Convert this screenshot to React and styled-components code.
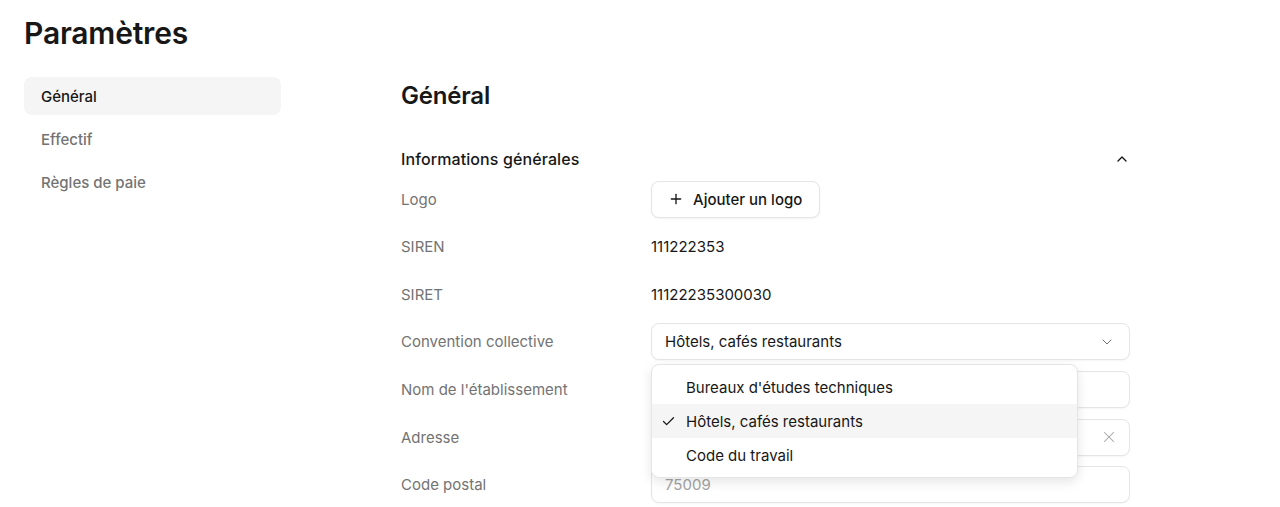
import styled, { createGlobalStyle } from 'styled-components';
import { Plus, ChevronUp, ChevronDown, Check, X } from 'lucide-react';

const Global = createGlobalStyle`
	body {
		margin: 0;
		background: #ffffff;
		font-family: Inter, "Noto Sans", sans-serif;
		color: #171717;
		-webkit-font-smoothing: antialiased;
	}
`;

const Page = styled.div`
	padding: 14px 24px 0 24px;
	height: 507px;
	box-sizing: border-box;
	overflow: hidden;
`;

const Title = styled.h1`
	margin: 0;
	font-size: 30px;
	line-height: 38px;
	font-weight: 600;
	letter-spacing: -0.2px;
`;

const Layout = styled.div`
	display: flex;
	margin-top: 25px;
	gap: 120px;
`;

const Sidebar = styled.nav`
	width: 257px;
	display: flex;
	flex-direction: column;
	gap: 5px;
`;

const NavItem = styled.div`
	height: 38px;
	display: flex;
	align-items: center;
	padding: 0 17px;
	border-radius: 8px;
	font-size: 15px;
	font-weight: 500;
	color: ${(p) => (p.$active ? '#171717' : '#737373')};
	background: ${(p) => (p.$active ? '#f5f5f5' : 'transparent')};
`;

const Main = styled.main`
	width: 729px;
`;

const Heading = styled.h2`
	margin: 0;
	font-size: 24px;
	line-height: 38px;
	font-weight: 600;
	letter-spacing: -0.2px;
`;

const SectionHead = styled.div`
	display: flex;
	align-items: center;
	justify-content: space-between;
	height: 24px;
	margin-top: 32px;
	h3 {
		margin: 0;
		font-size: 16px;
		font-weight: 500;
		letter-spacing: 0.1px;
	}
`;

const Rows = styled.div`
	margin-top: 9.5px;
	display: flex;
	flex-direction: column;
	gap: 10.67px;
`;

const Row = styled.div`
	display: grid;
	grid-template-columns: 250px 1fr;
	align-items: center;
	height: 37px;
	position: relative;
`;

const Label = styled.span`
	font-size: 15px;
	color: #737373;
`;

const Value = styled.span`
	font-size: 15px;
	color: #171717;
`;

const Button = styled.button`
	justify-self: start;
	height: 37px;
	display: flex;
	align-items: center;
	gap: 9px;
	padding: 0 17px 0 16px;
	border: 1px solid #e5e5e5;
	border-radius: 8px;
	background: #fff;
	box-shadow: 0 1px 2px rgba(0, 0, 0, 0.05);
	font-family: inherit;
	font-size: 15px;
	font-weight: 500;
	color: #171717;
`;

const Field = styled.div`
	height: 37px;
	box-sizing: border-box;
	display: flex;
	align-items: center;
	justify-content: space-between;
	padding: 0 ${(p) => p.$padRight || 14}px 0 13px;
	border: 1px solid #e5e5e5;
	border-radius: 8px;
	background: #fff;
	box-shadow: 0 1px 2px rgba(0, 0, 0, 0.04);
	font-size: 15px;
	color: ${(p) => (p.$placeholder ? '#a3a3a3' : '#171717')};
`;

const Menu = styled.div`
	position: absolute;
	left: 250px;
	top: 41px;
	width: 427px;
	box-sizing: border-box;
	padding: 5px 0;
	background: #fff;
	border: 1px solid #e5e5e5;
	border-radius: 8px;
	box-shadow: 0 4px 12px rgba(0, 0, 0, 0.1);
	z-index: 10;
`;

const Option = styled.div`
	height: 34px;
	display: flex;
	align-items: center;
	padding-left: 8px;
	gap: 10px;
	font-size: 15px;
	color: #171717;
	background: ${(p) => (p.$selected ? '#f5f5f5' : 'transparent')};
`;

const CheckSlot = styled.span`
	width: 16px;
	display: flex;
	justify-content: center;
`;

const options = ["Bureaux d'études techniques", 'Hôtels, cafés restaurants', 'Code du travail'];

export default function App() {
	return (
		<Page>
			<Global />
			<Title>Paramètres</Title>
			<Layout>
				<Sidebar>
					<NavItem $active>Général</NavItem>
					<NavItem>Effectif</NavItem>
					<NavItem>Règles de paie</NavItem>
				</Sidebar>
				<Main>
					<Heading>Général</Heading>
					<SectionHead>
						<h3>Informations générales</h3>
						<ChevronUp size={16} strokeWidth={2} color="#171717" />
					</SectionHead>
					<Rows>
						<Row>
							<Label>Logo</Label>
							<Button>
								<Plus size={16} strokeWidth={2} />
								Ajouter un logo
							</Button>
						</Row>
						<Row>
							<Label>SIREN</Label>
							<Value>111222353</Value>
						</Row>
						<Row>
							<Label>SIRET</Label>
							<Value>11122235300030</Value>
						</Row>
						<Row>
							<Label>Convention collective</Label>
							<Field>
								Hôtels, cafés restaurants
								<ChevronDown size={16} strokeWidth={1.5} color="#737373" />
							</Field>
							<Menu>
								{options.map((o, i) => (
									<Option key={o} $selected={i === 1}>
										<CheckSlot>{i === 1 && <Check size={15} strokeWidth={2} />}</CheckSlot>
										{o}
									</Option>
								))}
							</Menu>
						</Row>
						<Row>
							<Label>Nom de l'établissement</Label>
							<Field />
						</Row>
						<Row>
							<Label>Adresse</Label>
							<Field $padRight={11}>
								<span />
								<X size={18} strokeWidth={1.4} color="#a3a3a3" />
							</Field>
						</Row>
						<Row>
							<Label>Code postal</Label>
							<Field $placeholder>75009</Field>
						</Row>
					</Rows>
				</Main>
			</Layout>
		</Page>
	);
}
